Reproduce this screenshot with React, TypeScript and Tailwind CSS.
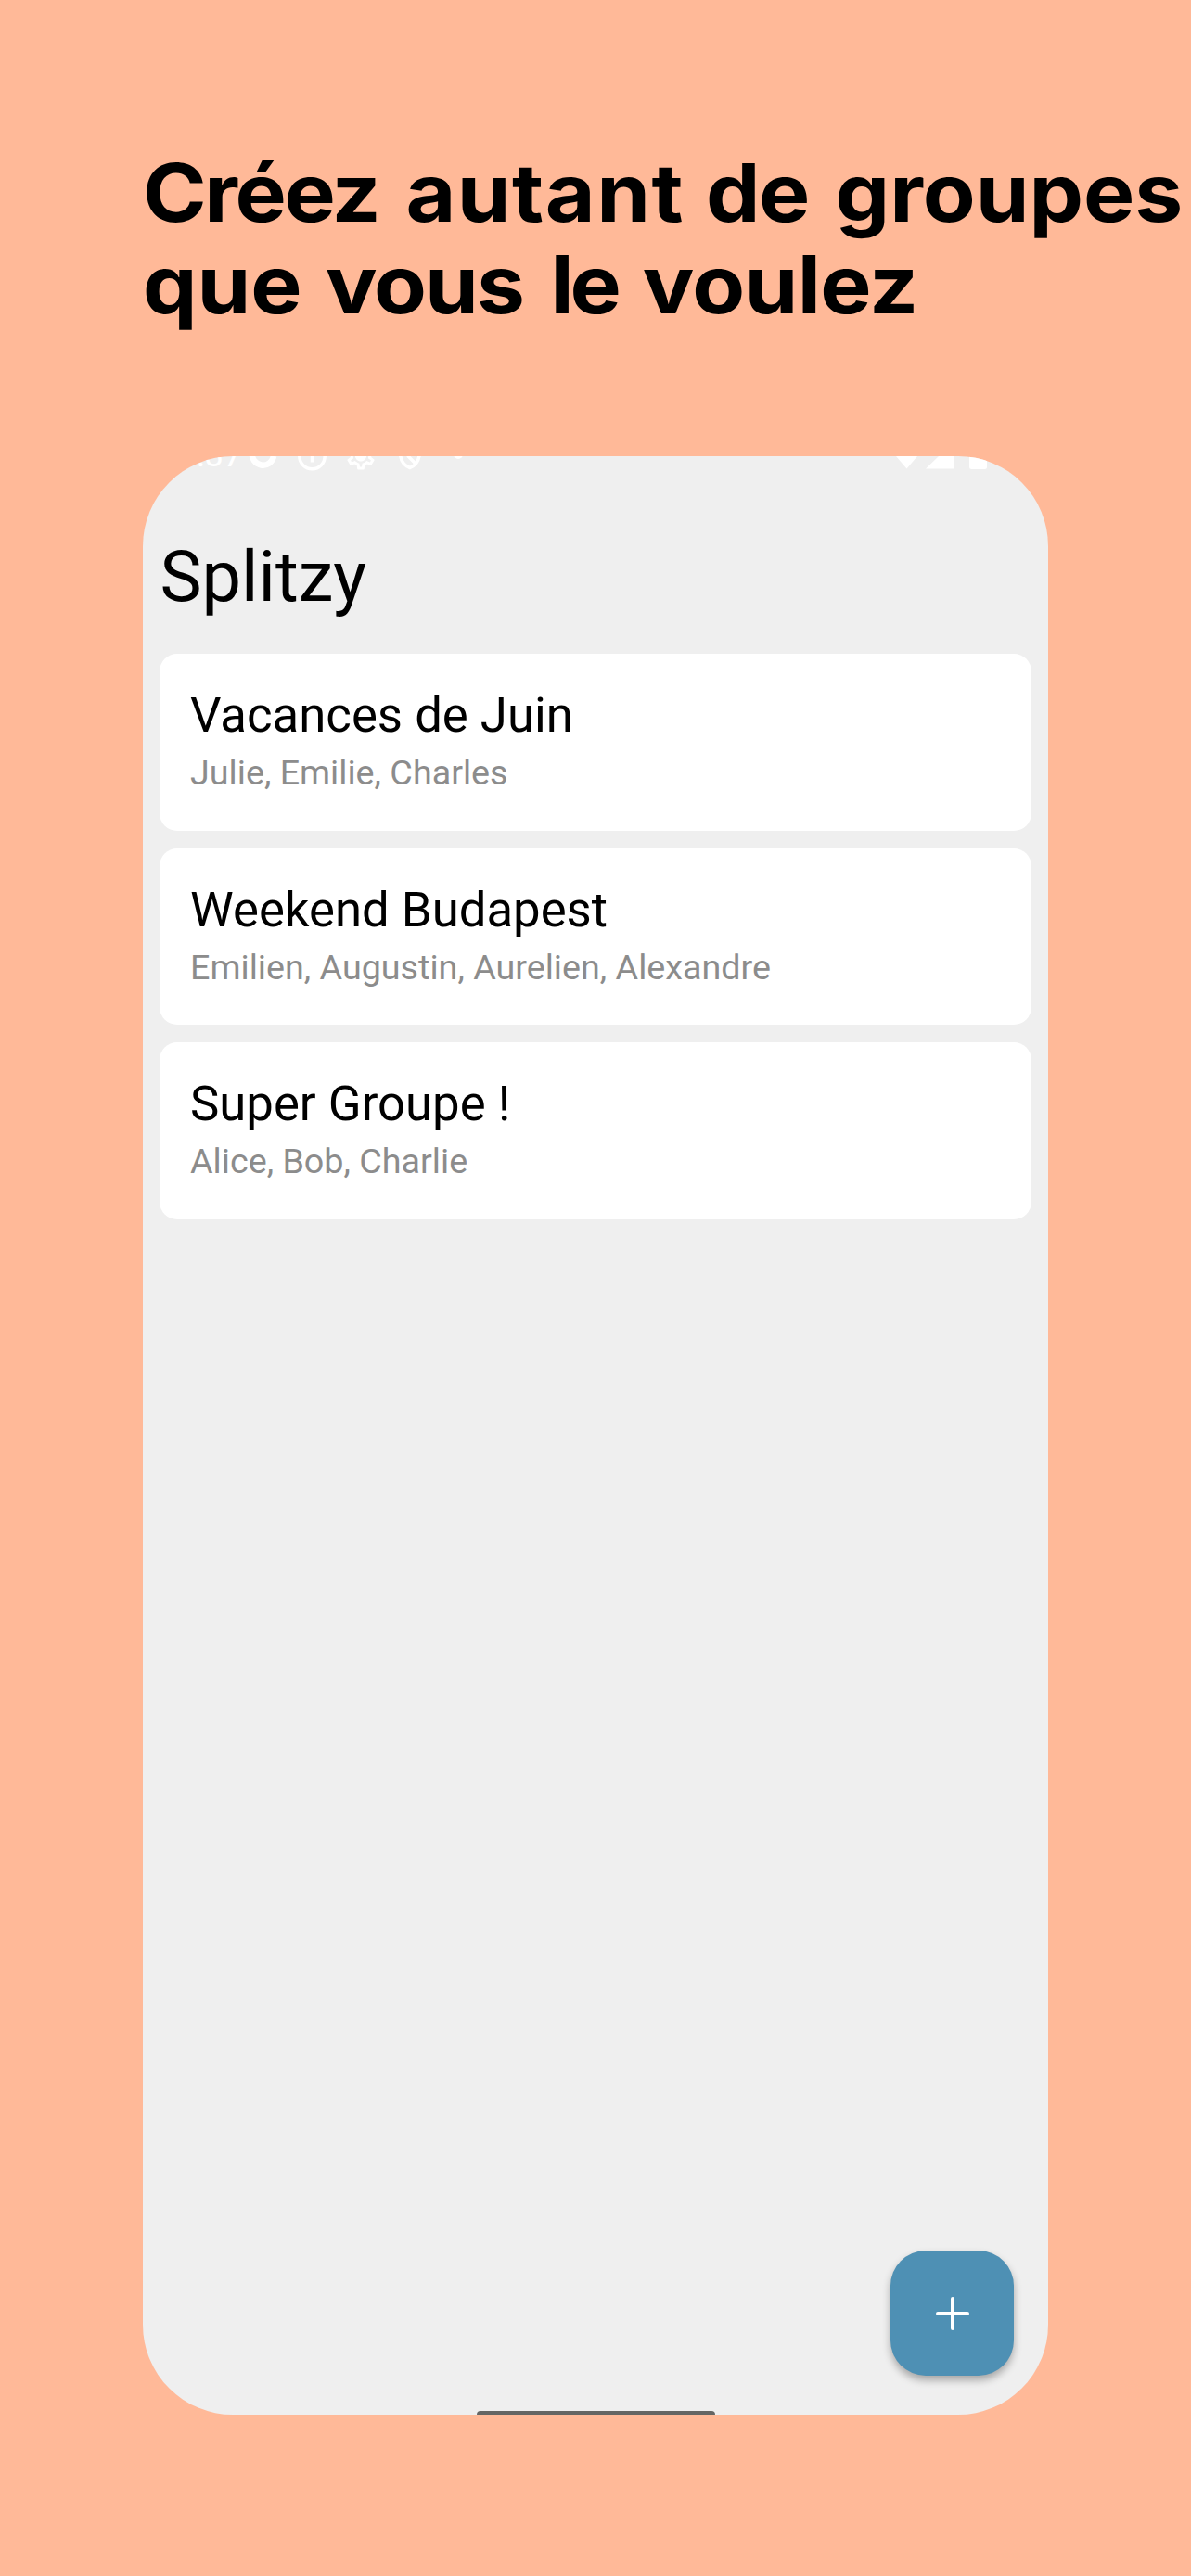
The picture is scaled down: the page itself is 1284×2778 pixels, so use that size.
import { MdOutlineSettings } from "react-icons/md";

const groups = [
  { name: "Vacances de Juin", members: "Julie, Emilie, Charles" },
  { name: "Weekend Budapest", members: "Emilien, Augustin, Aurelien, Alexandre" },
  { name: "Super Groupe !", members: "Alice, Bob, Charlie" },
];

function StatusBar() {
  return (
    <svg width="976" height="20" viewBox="154 492 976 20" fill="none" stroke="#fff" className="block shrink-0">
      <text x="212" y="502.500" fontSize="36" fill="#fff" stroke="none">
        :37
      </text>
      <g strokeWidth="3.500">
        <path d="M272 488a11.500 11.500 0 0 0 23 4" strokeWidth="6.500" />
        <circle cx="336.500" cy="492" r="13.700" />
        <path d="M336.500 488v10.500" />
        <path d="M431.500 488c0 9 4 14 10.500 16.500 6-2.500 10-7.500 10.500-16.500M439.500 491.500l8.500 8.500" />
      </g>
      <MdOutlineSettings x="371" y="473.500" size={36} color="#fff" />
      <g fill="#fff" stroke="none">
        <circle cx="389" cy="491" r="6" />
        <circle cx="494" cy="490" r="5" />
        <path d="M966 492h23l-11.500 13.500zM998 505.500L1012 492h16v13.500z" />
        <rect x="1045" y="486" width="19" height="20" rx="2.500" />
      </g>
    </svg>
  );
}

export default function App() {
  return (
    <div className="flex h-[2778px] w-[1284px] flex-col overflow-hidden bg-[#ffb998] pl-[154px] font-[Roboto,sans-serif] text-black">
      <h1 className="mt-[159px] h-[333px] origin-left scale-x-[1.08] whitespace-nowrap font-[Inter,sans-serif] text-[86px] leading-[99px] font-bold">
        <span className="mr-[6.5px] tracking-[-2.2px]">Créez</span>{" "}
        <span className="mr-[1px] tracking-[1.3px]">autant</span>{" "}
        <span className="mr-[6px] tracking-[-1.3px]">de</span>{" "}
        <span>groupes</span>
        <br />
        <span className="mr-[3px]">que</span>{" "}
        <span className="mr-[7px] tracking-[-1.8px]">vous</span>{" "}
        <span className="mr-[5px] tracking-[-4px]">le</span>{" "}
        <span className="tracking-[-0.6px]">voulez</span>
      </h1>
      <main className="relative flex h-[2112px] w-[976px] shrink-0 flex-col overflow-hidden rounded-[97px] bg-[#efefef]">
        <StatusBar />
        <h2 className="mt-[67px] ml-[18.5px] h-[126px] text-[75.8px] leading-[88px]">Splitzy</h2>
        <div className="flex flex-col gap-[19px] px-[18px]">
          {groups.map((g) => (
            <section key={g.name} className="h-[190.500px] rounded-[19px] bg-white px-[33px] pt-[35px]">
              <h3 className="text-[52.700px] leading-[62px]">{g.name}</h3>
              <p className="text-[37.700px] leading-[62px] text-[#8c8c8c]">{g.members}</p>
            </section>
          ))}
        </div>
        <button className="absolute right-[37px] bottom-[42px] flex h-[135px] w-[133px] items-center justify-center rounded-[38px] bg-[#4e90b4] shadow-[0_5px_9px_rgba(0,0,0,0.3)]">
          <svg width="36" height="36" viewBox="0 0 36 36" stroke="#fff" strokeWidth="4" strokeLinecap="round">
            <path d="M2 18h32M18 2v32" />
          </svg>
        </button>
        <div className="absolute bottom-0 left-[360px] h-[4px] w-[257px] rounded-t-[4px] bg-[#646664]" />
      </main>
    </div>
  );
}
